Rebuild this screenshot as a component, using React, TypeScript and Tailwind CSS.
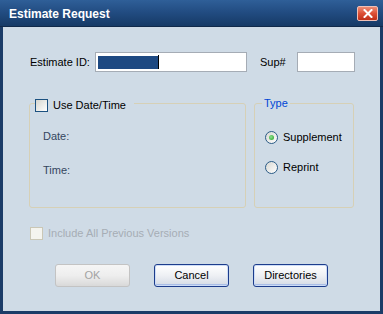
import React from "react";

function XPCheckbox({ disabled = false }: { disabled?: boolean }) {
  return (
    <span
      className={
        disabled
          ? "block w-[13px] h-[13px] border border-[#cac7b6] bg-[#f4f4ef]"
          : "block w-[13px] h-[13px] border border-[#1c5180] bg-linear-to-br from-[#d6d6cf] to-white"
      }
    />
  );
}

function XPRadio({ checked = false }: { checked?: boolean }) {
  return (
    <span className="flex items-center justify-center w-[13px] h-[13px] rounded-full border border-[#2b5b86] bg-linear-to-br from-[#d8d8d2] to-white">
      {checked && (
        <span className="block w-[5px] h-[5px] rounded-full bg-[radial-gradient(circle_at_40%_40%,#8fe08f,#21a121)]" />
      )}
    </span>
  );
}

function XPButton({ label, disabled = false }: { label: string; disabled?: boolean }) {
  return (
    <button
      className={
        disabled
          ? "w-[75px] h-[23px] rounded-[3px] border border-[#c3c3c3] bg-linear-to-b from-[#f5f5f5] via-[#eeeeee] to-[#d9d9d9] text-[#a3a3a3] text-[11px] leading-none"
          : "w-[75px] h-[23px] rounded-[3px] border border-[#1c3c8c] bg-linear-to-b from-[#ffffff] via-[#eef0f4] to-[#d3dae4] shadow-[inset_0_0_0_1px_#cddcf6,inset_0_-2px_0_#a9bde6] text-black text-[11px] leading-none"
      }
    >
      {label}
    </button>
  );
}

export default function App() {
  return (
    <div className="w-[383px] h-[314px] flex flex-col bg-[#1b3c68] font-['Liberation_Sans',Arial,sans-serif] select-none">
      {/* Title bar */}
      <div className="h-[27px] flex items-center justify-between pl-[9px] pr-[5px] bg-linear-to-b from-[#2f5f98] via-[#214b80] to-[#163a66] border-b border-[#10294a]">
        <span className="text-white font-bold text-[12px] pt-[2px]">Estimate Request</span>
        <div className="w-[21px] h-[15px] rounded-[2px] border border-[#f0c0b6] bg-linear-to-b from-[#ec8b74] via-[#dc4f36] to-[#bf2f18] flex items-center justify-center">
          <svg width="10" height="9" viewBox="0 0 10 9">
            <path d="M1.5 1 L8.5 8 M8.5 1 L1.5 8" stroke="white" strokeWidth="2" strokeLinecap="square" />
          </svg>
        </div>
      </div>

      {/* Client area */}
      <div className="flex-1 mx-[3px] mb-[3px] bg-[#cfdbe6] flex flex-col pt-[25px] pl-[26px] text-[11px] text-black">
        {/* Row 1 */}
        <div className="flex items-center h-[20px] pl-[1px]">
          <span className="w-[65px]">Estimate ID:</span>
          <div className="w-[152px] h-[20px] border border-[#a5acb5] bg-white flex items-center pl-[2px]">
            <span className="block w-[60px] h-[13px] bg-[#1d4982]" />
            <span className="block w-[1px] h-[14px] bg-black" />
          </div>
          <span className="ml-[13px] w-[37px]">Sup#</span>
          <div className="w-[58px] h-[20px] border border-[#a5acb5] bg-white" />
        </div>

        {/* Groups */}
        <div className="flex mt-[31px]">
          <div className="relative w-[217px] h-[105px] border border-[#d6d0b6] rounded-[3px]">
            <div className="absolute left-[5px] top-[-5px] flex items-center gap-[5px] pr-[8px] h-[13px] bg-[#cfdbe6]">
              <XPCheckbox />
              <span>Use Date/Time</span>
            </div>
            <div className="flex flex-col pl-[13px] pt-[26px] gap-[21px] text-[#34465e]">
              <span className="h-[13px] leading-[13px]">Date:</span>
              <span className="h-[13px] leading-[13px]">Time:</span>
            </div>
          </div>

          <div className="relative ml-[8px] w-[100px] h-[105px] border border-[#d6d0b6] rounded-[3px]">
            <span className="absolute left-[7px] top-[-7px] px-[2px] h-[13px] leading-[13px] bg-[#cfdbe6] text-[#0046d5]">
              Type
            </span>
            <div className="flex flex-col pl-[10px] pt-[27px] gap-[17px]">
              <div className="flex items-center gap-[5px] h-[13px]">
                <XPRadio checked />
                <span>Supplement</span>
              </div>
              <div className="flex items-center gap-[5px] h-[13px]">
                <XPRadio />
                <span>Reprint</span>
              </div>
            </div>
          </div>
        </div>

        {/* Include */}
        <div className="flex items-center gap-[5px] mt-[19px] pl-[1px] h-[13px]">
          <XPCheckbox disabled />
          <span className="text-[#a6adb5]">Include All Previous Versions</span>
        </div>

        {/* Buttons */}
        <div className="flex gap-[24px] mt-[24px] ml-[26px]">
          <XPButton label="OK" disabled />
          <XPButton label="Cancel" />
          <XPButton label="Directories" />
        </div>
      </div>
    </div>
  );
}
